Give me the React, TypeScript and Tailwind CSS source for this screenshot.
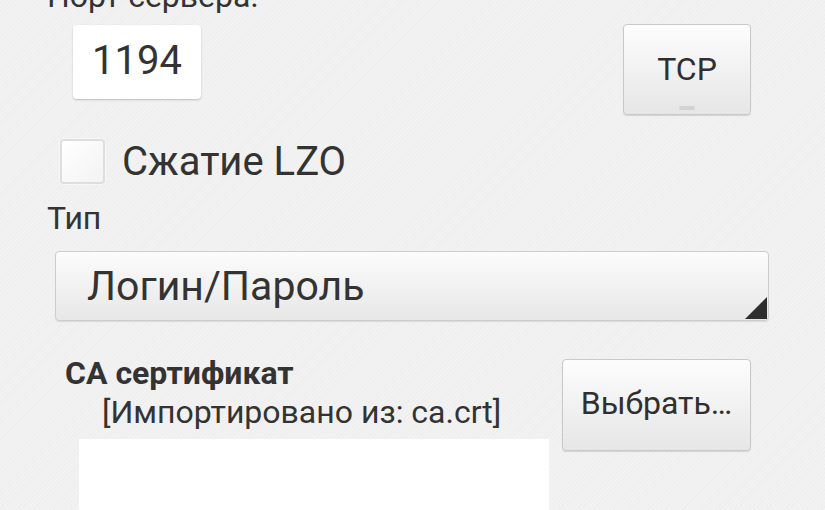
import React from "react";

const font = { fontFamily: "Roboto, 'Noto Sans', sans-serif" };

function HoloButton({ children, className }: { children: React.ReactNode; className?: string }) {
  return (
    <div
      className={
        "relative flex items-center justify-center rounded-[4px] border border-[#c9c9c9] bg-gradient-to-b from-[#fdfdfd] to-[#e6e6e6] shadow-[0_1px_1px_rgba(0,0,0,0.12)] text-[#2f2f2f] " +
        (className ?? "")
      }
    >
      {children}
    </div>
  );
}

export default function App() {
  return (
    <div
      style={font}
      className="w-[825px] h-[510px] overflow-hidden bg-[#f0f0f0] bg-[repeating-linear-gradient(135deg,#f2f2f2_0px,#f2f2f2_2px,#eeeeee_2px,#eeeeee_3px)] text-[#333]"
    >
      {/* server port */}
      <div className="pl-[47px] mt-[-22px] text-[32px] leading-[36px]">Порт сервера:</div>

      <div className="flex items-start justify-between pl-[73px] pr-[74px] mt-[10px]">
        <div className="mt-[1px] w-[128px] h-[74px] rounded-[4px] bg-white shadow-[0_1px_2px_rgba(0,0,0,0.22)] flex items-center justify-center text-[40px] pb-[2px]">
          1194
        </div>
        <HoloButton className="w-[128px] h-[91px] text-[32px]">
          <span className="-mt-[2px]">TCP</span>
          <span className="absolute bottom-[4px] left-1/2 -translate-x-1/2 w-[15px] h-[4px] bg-[#d2d2d2]" />
        </HoloButton>
      </div>

      {/* LZO */}
      <div className="flex items-center pl-[60px] mt-[24px]">
        <div className="w-[45px] h-[45px] rounded-[4px] border-2 border-[#dedede] bg-gradient-to-br from-white to-[#f3f3f3] shadow-[0_0_0_1px_#f7f7f7]" />
        <span className="ml-[17px] text-[40px] leading-[45px]">Сжатие LZO</span>
      </div>

      {/* type */}
      <div className="pl-[47px] mt-[16px] text-[32px] leading-[36px]">Тип</div>

      <div className="ml-[55px] mt-[15px] w-[714px] h-[70px] relative rounded-[4px] border border-[#cdcdcd] bg-gradient-to-b from-[#fcfcfc] to-[#e7e7e7] shadow-[0_1px_1px_rgba(0,0,0,0.1)] flex items-center pl-[31px]">
        <span className="text-[41px] leading-[48px]">Логин/Пароль</span>
        <svg className="absolute right-[1px] bottom-[1px]" width="22" height="22" viewBox="0 0 22 22">
          <polygon points="22,0 22,22 0,22" fill="#2e2e2e" />
        </svg>
      </div>

      {/* CA */}
      <div className="flex mt-[37px]">
        <div className="flex flex-col pl-[65px] w-[562px]">
          <div className="text-[32px] font-bold leading-[36px] mt-[-3px]">CA сертификат</div>
          <div className="pl-[37px] text-[32px] leading-[38px] mt-[2px]">[Импортировано из: ca.crt]</div>
          <div className="ml-[14px] mt-[8px] w-[470px] h-[80px] bg-white" />
        </div>
        <HoloButton className="w-[189px] h-[92px] text-[32px] mt-[1px]">
          <span className="-mt-[4px]">Выбрать…</span>
        </HoloButton>
      </div>
    </div>
  );
}
